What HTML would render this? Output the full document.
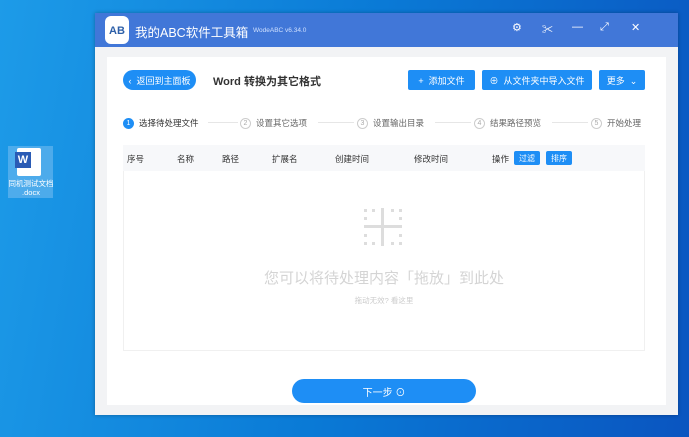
<!DOCTYPE html>
<html><head><meta charset="utf-8"><style>
*{margin:0;padding:0;box-sizing:border-box}
body{width:689px;height:437px;overflow:hidden;position:relative;font-family:"Liberation Sans","Noto Sans CJK SC",sans-serif;background:linear-gradient(100deg,#1d9be8 0%,#0a7ad6 50%,#0a55c0 100%)}
.a{position:absolute}
.win{left:95px;top:13px;width:583px;height:402px;background:#f2f3f5;box-shadow:0 0 4px rgba(0,0,0,.3)}
.tb{left:0;top:0;width:583px;height:34px;background:#4177d8}
.panel{left:12px;top:44px;width:559px;height:348px;background:#fff}
.btn{background:#1e8ef5;color:#fff;font-size:9px;display:flex;align-items:center;justify-content:center;border-radius:2px}
.th{font-size:8.5px;color:#333;top:153px}
.step{font-size:8.5px;color:#666;top:117px}
.c{display:inline-block;width:11px;height:11px;border-radius:50%;border:1px solid #ccc;font-size:7px;text-align:center;line-height:9px;color:#aaa;margin-right:5px;vertical-align:middle}
.ln{height:1px;background:#e6e6e6;top:122px}
.ic{color:#fff;font-size:11px;top:8px}
</style></head><body>
<div class="a" style="left:8px;top:146px;width:45px;height:52px;background:rgba(120,190,240,.55)"></div>
<div class="a" style="left:17px;top:148px;width:24px;height:28px;background:#fff;border-radius:2px"></div>
<div class="a" style="left:15px;top:152px;width:16px;height:16px;background:#2a5bb5;color:#fff;font-size:11px;font-weight:bold;text-align:center;line-height:16px">W</div>
<div class="a" style="left:6px;top:179px;width:50px;font-size:7.5px;color:#fff;text-align:center;line-height:9px">同机测试文档<br>.docx</div>
<div class="a win">
 <div class="a tb"></div>
 <div class="a" style="left:10px;top:3px;width:24px;height:28px;background:#fff;border-radius:6px;color:#2d5fa8;font-size:11px;font-weight:bold;text-align:center;line-height:30px">AB</div>
 <div class="a" style="left:40px;top:9px;color:#fff;font-size:12.5px">我的ABC软件工具箱</div>
 <div class="a" style="left:158px;top:14px;color:#cfe0ff;font-size:6.5px">WodeABC v6.34.0</div>
 <div class="a ic" style="left:417px">⚙</div>
 <div class="a ic" style="left:447px">✂</div>
 <div class="a ic" style="left:427px;left:428px;display:none"></div>
 <div class="a ic" style="left:477px">—</div>
 <div class="a ic" style="left:505px">⤢</div>
 <div class="a ic" style="left:536px">✕</div>
 <div class="a panel"></div>
</div>
<div class="a btn" style="left:123px;top:70px;width:73px;height:20px;border-radius:10px">‹&nbsp; 返回到主面板</div>
<div class="a" style="left:213px;top:73px;font-size:11px;font-weight:bold;color:#333">Word 转换为其它格式</div>
<div class="a btn" style="left:408px;top:70px;width:67px;height:20px">+&nbsp; 添加文件</div>
<div class="a btn" style="left:482px;top:70px;width:110px;height:20px">⊕&nbsp; 从文件夹中导入文件</div>
<div class="a btn" style="left:599px;top:70px;width:46px;height:20px">更多 &nbsp;⌄</div>
<div class="a step" style="left:123px;color:#333"><span class="c" style="background:#1e8ef5;border-color:#1e8ef5;color:#fff">1</span>选择待处理文件</div>
<div class="a ln" style="left:208px;width:30px"></div>
<div class="a step" style="left:240px"><span class="c">2</span>设置其它选项</div>
<div class="a ln" style="left:318px;width:36px"></div>
<div class="a step" style="left:357px"><span class="c">3</span>设置输出目录</div>
<div class="a ln" style="left:435px;width:36px"></div>
<div class="a step" style="left:474px"><span class="c">4</span>结果路径预览</div>
<div class="a ln" style="left:552px;width:36px"></div>
<div class="a step" style="left:591px"><span class="c">5</span>开始处理</div>
<div class="a" style="left:123px;top:145px;width:522px;height:26px;background:#f7f8fa"></div>
<div class="a" style="left:123px;top:171px;width:522px;height:180px;border:1px solid #f0f0f0;border-top:none"></div>
<div class="a th" style="left:127px">序号</div>
<div class="a th" style="left:177px">名称</div>
<div class="a th" style="left:222px">路径</div>
<div class="a th" style="left:272px">扩展名</div>
<div class="a th" style="left:335px">创建时间</div>
<div class="a th" style="left:414px">修改时间</div>
<div class="a th" style="left:492px">操作</div>
<div class="a btn" style="left:514px;top:151px;width:26px;height:14px;font-size:8px">过滤</div>
<div class="a btn" style="left:546px;top:151px;width:26px;height:14px;font-size:8px">排序</div>
<svg class="a" style="left:364px;top:208px" width="40" height="38"><g fill="#ddd"><rect x="0" y="17" width="38" height="3"/><rect x="17" y="0" width="3" height="38"/><rect x="0" y="1" width="3" height="3"/><rect x="8" y="1" width="3" height="3"/><rect x="27" y="1" width="3" height="3"/><rect x="35" y="1" width="3" height="3"/><rect x="0" y="9" width="3" height="3"/><rect x="35" y="9" width="3" height="3"/><rect x="0" y="26" width="3" height="3"/><rect x="35" y="26" width="3" height="3"/><rect x="0" y="34" width="3" height="3"/><rect x="8" y="34" width="3" height="3"/><rect x="27" y="34" width="3" height="3"/><rect x="35" y="34" width="3" height="3"/></g></svg>
<div class="a" style="left:262px;top:267px;width:244px;text-align:center;font-size:15px;color:#d4d4d4">您可以将待处理内容「拖放」到此处</div>
<div class="a" style="left:334px;top:295px;width:100px;text-align:center;font-size:7.5px;color:#ccc">拖动无效? 看这里</div>
<div class="a btn" style="left:292px;top:379px;width:184px;height:24px;border-radius:12px;font-size:10px">下一步 ⊙</div>
</body></html>
